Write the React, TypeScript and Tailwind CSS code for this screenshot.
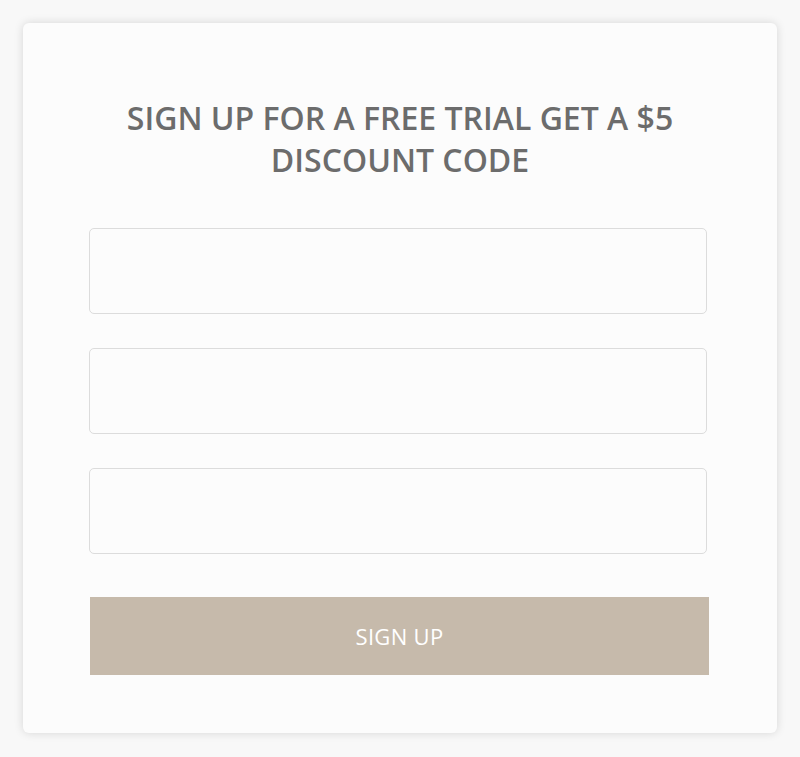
export default function App() {
  return (
    <div className="min-h-[757px] bg-[#f8f8f8] px-[23px] pt-[23px] pb-[24px] font-['Open_Sans',sans-serif]">
      <div className="flex h-[710px] w-[754px] flex-col items-center rounded-md bg-[#fcfcfc] px-[66px] pt-[74px] shadow-[0_0_10px_rgba(0,0,0,0.14)]">
        <h1 className="text-center text-[32px] leading-[42px] font-semibold text-[#6c6c6c]">
          SIGN UP FOR A FREE TRIAL GET A $5 DISCOUNT CODE
        </h1>
        <form className="mt-[47px] flex w-full flex-col">
          <input
            type="text"
            className="h-[86px] w-[618px] rounded-[5px] border border-[#dcdcdc] bg-[#fcfcfc] px-4 outline-0"
          />
          <input
            type="email"
            className="mt-[34px] h-[86px] w-[618px] rounded-[5px] border border-[#dcdcdc] bg-[#fcfcfc] px-4 outline-0"
          />
          <input
            type="password"
            className="mt-[34px] h-[86px] w-[618px] rounded-[5px] border border-[#dcdcdc] bg-[#fcfcfc] px-4 outline-0"
          />
          <button
            type="button"
            className="mt-[43px] ml-px h-[78px] w-[619px] bg-[#c6baab] text-[22px] tracking-[0.3px] text-white"
          >
            SIGN UP
          </button>
        </form>
      </div>
    </div>
  );
}
